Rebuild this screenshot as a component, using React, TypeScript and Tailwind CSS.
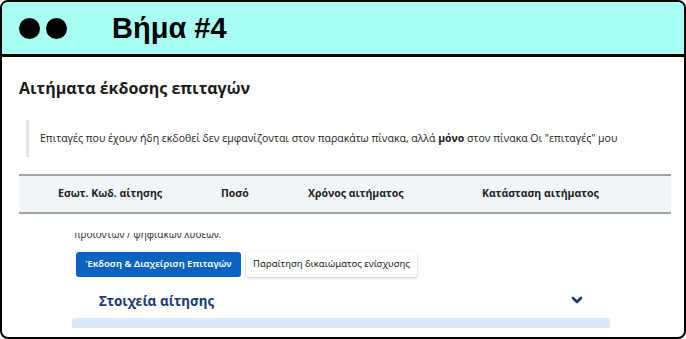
import React from "react";

export default function App() {
  return (
    <div className="w-[686px] h-[339px] bg-white">
      <div className="w-[686px] h-[339px] border-2 border-black rounded-[8px] overflow-hidden flex flex-col bg-white">
        <div className="h-[55px] shrink-0 bg-[#aafff4] border-b-[3px] border-black flex items-center">
          <div className="flex gap-[6px] ml-[17px]">
            <div className="w-[21px] h-[21px] rounded-full bg-black" />
            <div className="w-[21px] h-[21px] rounded-full bg-black" />
          </div>
          <div className="ml-[45px] text-[29px] font-bold text-black leading-none mt-[1px]" style={{ fontFamily: '"Liberation Sans", Arial, sans-serif' }}>
            Βήμα #4
          </div>
        </div>
        <div className="flex-1 relative" style={{ fontFamily: '"Open Sans", "Noto Sans", sans-serif' }}>
          <div className="pl-[17px] pt-[21px] text-[16px] font-bold text-[#1b1b1b] leading-[20px]">
            Αιτήματα έκδοσης επιταγών
          </div>
          <div className="ml-[24px] mt-[22px] border-l-[3px] border-[#e3e5e8] h-[37px] flex items-center pl-[11px] text-[10.5px] text-[#222]">
            <span>
              Επιταγές που έχουν ήδη εκδοθεί δεν εμφανίζονται στον παρακάτω πίνακα, αλλά <b>μόνο</b> στον πίνακα Οι "επιταγές" μου
            </span>
          </div>
          <div className="ml-[17px] mt-[17px] w-[652px] h-[40px] bg-[#f1f5fa] border-t-2 border-b-2 border-[#9ea3a8] flex items-center text-[10.5px] font-bold text-[#222]">
            <div className="pl-[39px] w-[202px]">Εσωτ. Κωδ. αίτησης</div>
            <div className="w-[87px]">Ποσό</div>
            <div className="w-[174px]">Χρόνος αιτήματος</div>
            <div>Κατάσταση αιτήματος</div>
          </div>
          <div className="relative mt-[19px] h-[95px] overflow-hidden" style={{ fontFamily: '"Noto Sans", sans-serif' }}>
            <div className="absolute left-[72px] top-[-4px] text-[10px] text-[#333] leading-none">προϊόντων / ψηφιακών λύσεων.</div>
            <div className="absolute left-[74px] top-[19px] flex gap-[5px]">
              <div className="h-[25px] w-[165px] bg-[#0b63c1] rounded-[3px] text-white text-[9.5px] font-semibold flex items-center justify-center">
                Έκδοση &amp; Διαχείριση Επιταγών
              </div>
              <div className="h-[25px] w-[171px] bg-white rounded-[3px] shadow-[0_1px_3px_rgba(0,0,0,0.25)] text-[#222] text-[9.5px] flex items-center justify-center">
                Παραίτηση δικαιώματος ενίσχυσης
              </div>
            </div>
            <div className="absolute left-[97px] top-[58px] text-[13.5px] font-bold text-[#1c3a78]">Στοιχεία αίτησης</div>
            <svg className="absolute left-[569px] top-[63px]" width="12" height="9" viewBox="0 0 12 9">
              <path d="M2 2 L6 6 L10 2" stroke="#1c3a78" strokeWidth="2.6" fill="none" strokeLinecap="round" strokeLinejoin="round" />
            </svg>
            <div className="absolute left-[70px] top-[85px] w-[538px] h-[10px] bg-[#dbe9fc] rounded-t-[3px]" />
          </div>
        </div>
      </div>
    </div>
  );
}
